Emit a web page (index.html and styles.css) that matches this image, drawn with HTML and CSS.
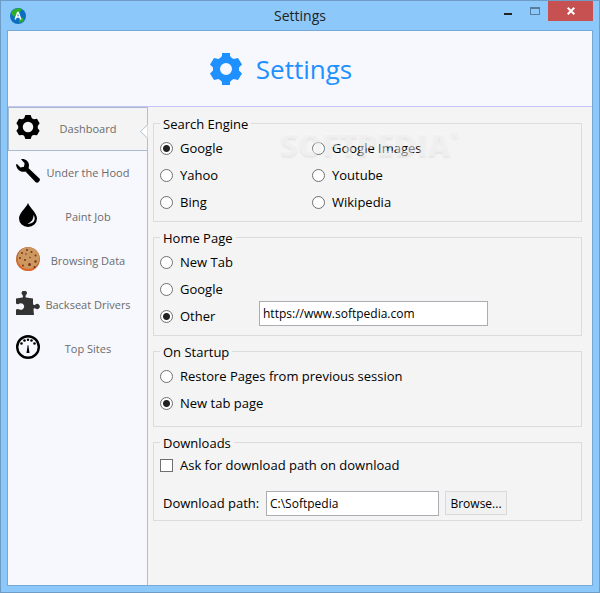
FILE: index.html
```html
<!DOCTYPE html>
<html lang="en">
<head>
<meta charset="utf-8">
<meta name="viewport" content="width=device-width, initial-scale=1">
<title>Settings</title>
<link rel="stylesheet" href="styles.css">
</head>
<body>
<div class="window">
  <div class="titlebar">
    <svg class="app-icon" viewBox="0 0 16 16" aria-hidden="true">
      <circle cx="8" cy="8" r="8" fill="#0b6fc0"/>
      <path d="M3 2Q7-1 12 1L10 4 7 6 6 9 3 8 1 5Z" fill="#2fae2b"/>
      <path d="M9 11L13 9.500 14 12Q12 15 9.500 15Z" fill="#2fae2b"/>
      <path d="M5.200 11.500L7.700 4.500H8.300L10.800 11.500M6.500 9H9.500" fill="none" stroke="#fff" stroke-width="1.500"/>
    </svg>
    <span class="window-title">Settings</span>
    <div class="window-buttons">
      <button class="win-btn" type="button" aria-label="Minimize"><svg width="10" height="10" viewBox="0 0 10 10"><path d="M1 7H9V9H1Z" fill="#222"/></svg></button>
      <button class="win-btn" type="button" aria-label="Maximize"><svg width="10" height="10" viewBox="0 0 10 10"><path d="M0 1H10V9H0ZM1 3V8H9V3Z" fill="#587c9c" fill-rule="evenodd"/></svg></button>
      <button class="win-btn close" type="button" aria-label="Close"><svg width="8" height="8" viewBox="0 0 8 8"><path d="M.7 .7L7.300 7.300M7.300 .7L.7 7.300" stroke="#fff" stroke-width="2"/></svg></button>
    </div>
  </div>

  <div class="client">
    <header class="header">
      <svg class="header-icon" viewBox="0 0 32 32" aria-hidden="true">
        <path fill="#1e90ff" fill-rule="evenodd" d="M12 0H20V3Q21.500 5 23.500 6L28 5 32 11.500 29 14.500V17.500L32 20.500 28 27 23.500 26Q21.500 27 20 29V32H12V29Q10.500 27 8.500 26L4 27 0 20.500 3 17.500V14.500L0 11.500 4 5 8.500 6Q10.500 5 12 3ZM16 10A6 6 0 1 0 16 22A6 6 0 1 0 16 10Z"/>
      </svg>
      <h1 class="heading">Settings</h1>
    </header>

    <div class="body">
      <nav class="sidebar" aria-label="Sections">
        <a class="nav-item active" href="#dashboard" aria-current="page">
          <svg class="nav-icon" viewBox="0 0 32 32" aria-hidden="true"><path fill-rule="evenodd" d="M12.500 0H19.500L21 4Q22 5.500 24 5.500L28 5 31.500 11 29 14.500V17.500L31.500 21 28 27 24 26.500Q22 26.500 21 28L19.500 32H12.500L11 28Q10 26.500 8 26.500L4 27 .5 21 3 17.500V14.500L.5 11 4 5 8 5.500Q10 5.500 11 4ZM16 9A7 7 0 1 0 16 23A7 7 0 1 0 16 9Z"/></svg>
          <span class="nav-label">Dashboard</span>
        </a>
        <a class="nav-item" href="#under-the-hood">
          <svg class="nav-icon" viewBox="0 0 24 24" aria-hidden="true"><path d="M5 .2C9-.5 13 2 13 6.500L12.600 9.200 23.500 19.500Q24.500 21 23 22.500 21.500 24.500 19.700 23.300L9.500 12.500C5 14 .5 10.500 0 5.500L1 5 4.500 8.600 8 7.800 8.600 4.300Z"/></svg>
          <span class="nav-label">Under the Hood</span>
        </a>
        <a class="nav-item" href="#paint-job">
          <svg class="nav-icon" viewBox="0 0 24 24" aria-hidden="true"><path fill-rule="evenodd" d="M12 0C14 5 21 10 21 15.500A9 8.500 0 0 1 3 15.500C3 10 10 5 12 0ZM17.500 12C17.500 16.500 15.500 19 11.500 20.500C15 21.500 18.700 19 18.700 15.500Q18.700 13.500 17.500 12Z"/></svg>
          <span class="nav-label">Paint Job</span>
        </a>
        <a class="nav-item" href="#browsing-data">
          <svg class="nav-icon" viewBox="0 0 24 24" aria-hidden="true">
            <circle cx="12" cy="12" r="12" fill="#b96a35"/>
            <path d="M0 13Q2 23 12 24 17 24 20 21L12 20Z" fill="#e06a2c"/>
            <circle cx="12.500" cy="11" r="10.800" fill="#cd985f"/>
            <g fill="#76351b"><circle cx="6" cy="6" r="1"/><circle cx="11" cy="3" r="1"/><circle cx="15.500" cy="5" r="1"/><circle cx="19.500" cy="8.500" r="1"/><circle cx="10" cy="7" r=".8"/><circle cx="4" cy="11" r="1"/><circle cx="9" cy="13" r="1"/><circle cx="14" cy="10.500" r=".8"/><circle cx="19.500" cy="14.500" r="1.200"/><circle cx="13.500" cy="17.500" r="1.500"/><circle cx="7" cy="18.500" r="1"/><circle cx="18.500" cy="20" r="1"/></g>
          </svg>
          <span class="nav-label">Browsing Data</span>
        </a>
        <a class="nav-item" href="#backseat-drivers">
          <svg class="nav-icon" viewBox="0 0 24 24" aria-hidden="true"><path fill="#333" d="M0 7.500L6.500 6.500Q7.500 5.500 6.500 4A2.600 2.600 0 1 1 10 4Q9 5.500 10 6.500L17 7.500V12.500Q17.500 15 19.500 13.500A2.600 2.600 0 1 1 19.500 17.500Q17.500 16.500 17.500 18.500L18 24H0V18.500Q2 17.500 3.500 18.500A3.300 3.300 0 1 0 3.500 12.500Q2 14 0 12.500Z"/></svg>
          <span class="nav-label">Backseat Drivers</span>
        </a>
        <a class="nav-item" href="#top-sites">
          <svg class="nav-icon" viewBox="0 0 24 24" aria-hidden="true"><circle cx="12" cy="12" r="10.800" fill="none" stroke="#000" stroke-width="2.400"/><circle cx="5.500" cy="8.500" r="1.300"/><circle cx="8.500" cy="5.500" r="1.300"/><circle cx="12" cy="4.800" r="1.200"/><circle cx="15.500" cy="5.500" r="1.300"/><circle cx="18.500" cy="8.500" r="1.300"/><path d="M11.700 10H12.300L13.500 18H10.500Z"/></svg>
          <span class="nav-label">Top Sites</span>
        </a>
      </nav>

      <main class="panel">
        <fieldset class="group">
          <legend>Search Engine</legend>
          <div class="engines">
            <label class="option"><input type="radio" name="engine" checked>Google</label>
            <label class="option"><input type="radio" name="engine">Google Images</label>
            <label class="option"><input type="radio" name="engine">Yahoo</label>
            <label class="option"><input type="radio" name="engine">Youtube</label>
            <label class="option"><input type="radio" name="engine">Bing</label>
            <label class="option"><input type="radio" name="engine">Wikipedia</label>
          </div>
          <div class="watermark" aria-hidden="true">SOFTPEDIA<span class="reg">®</span></div>
        </fieldset>

        <fieldset class="group">
          <legend>Home Page</legend>
          <div class="home">
            <div class="home-options">
              <label class="option"><input type="radio" name="home">New Tab</label>
              <label class="option"><input type="radio" name="home">Google</label>
              <label class="option"><input type="radio" name="home" checked>Other</label>
            </div>
            <div class="home-address">
              <input class="text-box" type="text" value="https://www.softpedia.com" aria-label="Home page address">
            </div>
          </div>
        </fieldset>

        <fieldset class="group startup">
          <legend>On Startup</legend>
          <label class="option"><input type="radio" name="startup">Restore Pages from previous session</label>
          <label class="option"><input type="radio" name="startup" checked>New tab page</label>
        </fieldset>

        <fieldset class="group downloads">
          <legend>Downloads</legend>
          <label class="option"><input type="checkbox">Ask for download path on download</label>
          <div class="path-row">
            <label class="path-label" for="path">Download path:</label>
            <input class="text-box path-box" id="path" type="text" value="C:\Softpedia">
            <button class="browse" type="button">Browse...</button>
          </div>
        </fieldset>
      </main>
    </div>
  </div>
</div>
</body>
</html>
```
FILE: styles.css
```css
* { box-sizing: border-box; }

body {
  margin: 0;
  font: 13px/17px "Open Sans", "Noto Sans", sans-serif;
  color: #000;
}

input, button { font: inherit; color: inherit; margin: 0; }

.window {
  display: flex;
  flex-direction: column;
  min-height: 100vh;
  padding: 0 6px 6px;
  border: 1px solid #6e9cc6;
  background: #8dc8fb;
}

/* Title bar */
.titlebar {
  display: grid;
  grid-template-columns: 1fr auto 1fr;
  align-items: center;
  height: 29px;
}
.app-icon { width: 16px; height: 16px; margin-left: 3px; }
.window-title { font-size: 14px; color: #222; }
.window-buttons { display: flex; justify-content: flex-end; align-self: start; }
.win-btn {
  display: flex;
  align-items: center;
  justify-content: center;
  width: 27px;
  height: 20px;
  padding: 0;
  border: 0;
  background: none;
}
.close { width: 45px; background: #c75050; }

.client {
  display: flex;
  flex-direction: column;
  flex: 1;
  border: 1px solid #76a9d6;
  background: #f7f8fd;
}

/* Header */
.header {
  display: flex;
  align-items: center;
  justify-content: center;
  gap: 14px;
  height: 76px;
  padding-right: 38px;
  border-bottom: 1px solid #c6c6f6;
}
.header-icon { width: 32px; height: 32px; }
.heading { margin: 0; font-size: 26px; line-height: 32px; font-weight: 400; color: #1e90ff; }

.body { display: flex; flex: 1; }

/* Sidebar */
.sidebar { width: 140px; border-right: 1px solid #b0bfce; }
.nav-item {
  display: flex;
  height: 44px;
  padding: 8px 11px 0 8px;
  color: #6b6b6b;
  font-size: 11px;
  line-height: 28px;
  text-decoration: none;
}
.nav-icon { width: 24px; height: 24px; flex: none; }
.nav-label { flex: 1; text-align: center; white-space: nowrap; }
.active {
  position: relative;
  padding: 7px 11px 0 7px;
  border: 1px solid #a9bbcd;
  border-right: 0;
  background: #f4f4f4;
}
.active::after {
  content: "";
  position: absolute;
  right: -6px;
  top: 18px;
  width: 9px;
  height: 9px;
  border: 1px solid #b6c4d2;
  background: #fff;
  transform: rotate(45deg);
  clip-path: polygon(0 0, 0 100%, 100% 100%);
}

/* Panel */
.panel {
  display: flex;
  flex-direction: column;
  gap: 6px;
  flex: 1;
  min-width: 0;
  padding: 7px 10px 8px 5px;
  background: #f4f4f4;
}
.group {
  position: relative;
  min-width: 0;
  margin: 0;
  padding: 2px 6px 5px;
  border: 1px solid #dcdcdc;
}
.group legend { padding: 2px 3px 0; }
.startup { padding-bottom: 9px; }
.downloads { padding-top: 0; padding-bottom: 4px; }

.option { display: flex; align-items: center; gap: 7px; height: 27px; }
.option input {
  appearance: none;
  width: 13px;
  height: 13px;
  border: 1px solid #707070;
  background: #fff;
}
.option input[type="radio"] { border-radius: 50%; }
.option input[type="radio"]:checked { background: radial-gradient(circle, #222 3px, #fff 4px); }

.engines { display: grid; grid-template-columns: 152px 1fr; }
.home { display: grid; grid-template-columns: 99px 1fr; }
.home-address { display: flex; align-items: flex-end; padding-bottom: 4px; }

.text-box {
  width: 229px;
  height: 25px;
  padding: 0 3px;
  border: 1px solid #abadb3;
  background: #fff;
  font-size: 12px;
}
.path-row { display: flex; margin-top: 12px; }
.path-label { width: 106px; padding-left: 3px; line-height: 25px; }
.path-box { width: 173px; }
.browse {
  width: 62px;
  height: 24px;
  margin-left: 6px;
  padding: 0;
  border: 1px solid #dadada;
  background: #f1f1f1;
  font-size: 12px;
}

.watermark {
  position: absolute;
  left: 126px;
  top: -9px;
  display: flex;
  font-size: 31px;
  line-height: 40px;
  font-weight: 800;
  color: rgba(248, 248, 248, 0.5);
  text-shadow: 0 2px 2px rgba(0, 0, 0, 0.06);
  pointer-events: none;
}
.reg { font-size: 11px; line-height: 20px; }
```
